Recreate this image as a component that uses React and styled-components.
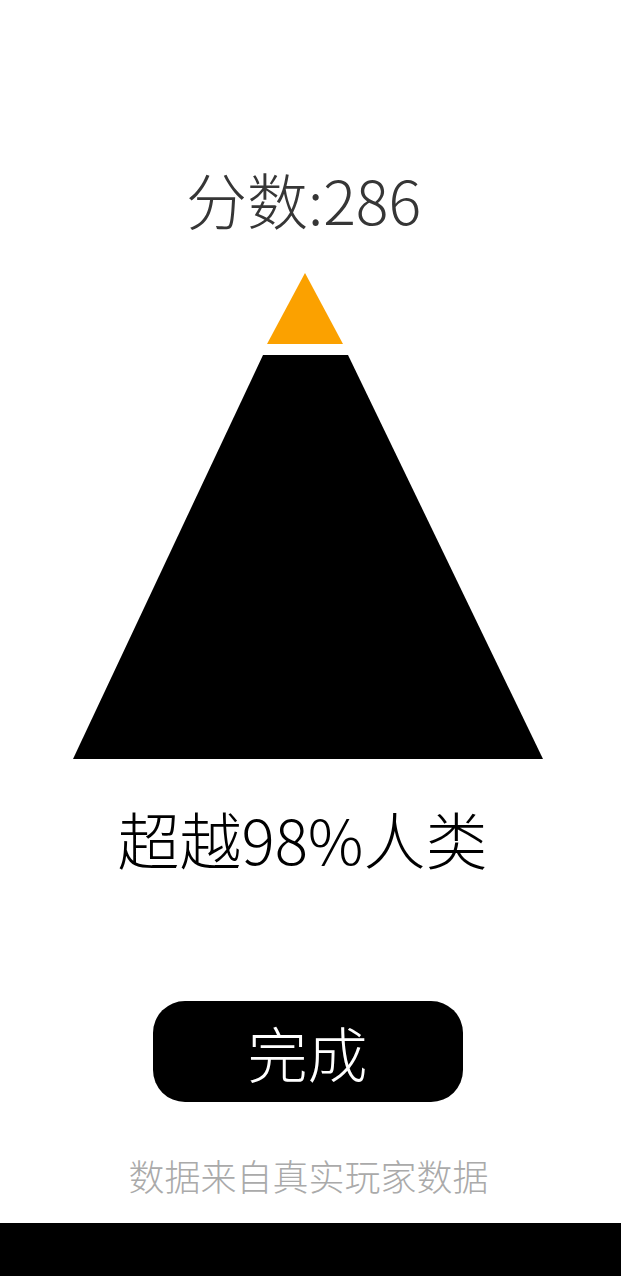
import React from "react";
import styled, { createGlobalStyle } from "styled-components";

const GlobalStyle = createGlobalStyle`
  html, body {
    margin: 0;
    padding: 0;
    background: #fff;
  }
  body {
    font-family: "Noto Sans CJK SC", "Noto Sans", sans-serif;
  }
`;

const Page = styled.div`
  height: 1276px;
  display: flex;
  flex-direction: column;
  align-items: center;
  overflow: hidden;
`;

const Score = styled.div`
  margin-top: 163px;
  height: 72px;
  line-height: 72px;
  font-size: 61px;
  font-weight: 300;
  color: #363636;
  margin-right: 14px;
`;

const Pyramid = styled.svg`
  display: block;
  margin-top: 35px;
  flex-shrink: 0;
`;

const Ratio = styled.div`
  margin-top: 38px;
  height: 80px;
  line-height: 80px;
  font-size: 62px;
  font-weight: 300;
  color: #000;
  margin-right: 16px;
`;

const DoneButton = styled.button`
  margin-top: 123px;
  margin-right: 6px;
  width: 310px;
  height: 101px;
  border: none;
  border-radius: 32px;
  background: #000;
  color: #fff;
  font-family: inherit;
  font-size: 60px;
  font-weight: 300;
  line-height: 1;
  padding: 0;
  cursor: pointer;
`;

const Source = styled.div`
  margin-top: 49px;
  margin-right: 4px;
  font-size: 36px;
  line-height: 48px;
  color: #aaa;
  font-weight: 300;
`;

const BottomBar = styled.div`
  margin-top: auto;
  width: 100%;
  height: 53px;
  background: #000;
  flex-shrink: 0;
`;

export default function App() {
  const score = 286;
  const percent = 98;
  return (
    <>
      <GlobalStyle />
      <Page>
        <Score>分数:{score}</Score>
        <Pyramid width="621" height="490" viewBox="0 0 621 490">
          <polygon points="305,3 267,74 343,74" fill="#fba100" />
          <polygon points="263,85 348,85 543,489 73,489" fill="#000" />
        </Pyramid>
        <Ratio>超越{percent}%人类</Ratio>
        <DoneButton>完成</DoneButton>
        <Source>数据来自真实玩家数据</Source>
        <BottomBar />
      </Page>
    </>
  );
}
